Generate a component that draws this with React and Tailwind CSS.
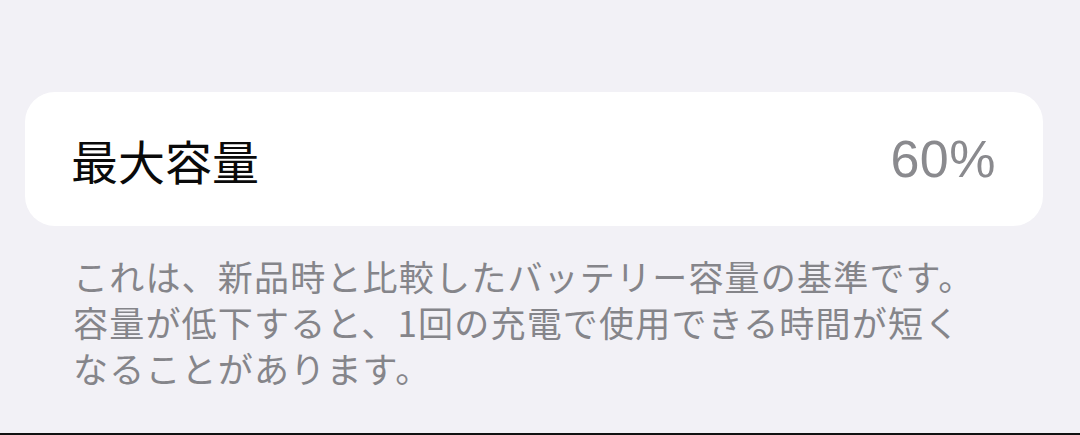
import React from 'react';

const JP = { fontFamily: '"Noto Sans CJK JP", "Noto Sans", sans-serif' };

export default function App() {
  return (
    <div className="h-[435px] w-[1080px] bg-[#f2f1f6] flex flex-col" style={JP}>
      <div className="flex-1 pt-[92px] pl-[25px] pr-[37px]">
        {/* capacity row */}
        <div className="h-[134px] rounded-[30px] bg-white flex items-center justify-between pl-[46px] pr-[47px]">
          <span className="text-[47px] leading-none text-[#0a0a0a]">最大容量</span>
          <span
            className="text-[52px] leading-none tracking-[0.5px] text-[#8a8a8e]"
            style={{ fontFamily: '"Liberation Sans", Arial, sans-serif' }}
          >
            60%
          </span>
        </div>
        {/* footnote */}
        <p className="mt-[27px] pl-[48px] text-[35px] leading-[46px] tracking-[1.2px] text-[#85858a] whitespace-nowrap">
          これは、新品時と比較したバッテリー容量の基準です。
          <br />
          容量が低下すると、1回の充電で使用できる時間が短く
          <br />
          なることがあります。
        </p>
      </div>
      <div className="h-[2px] bg-[#111]" />
    </div>
  );
}
